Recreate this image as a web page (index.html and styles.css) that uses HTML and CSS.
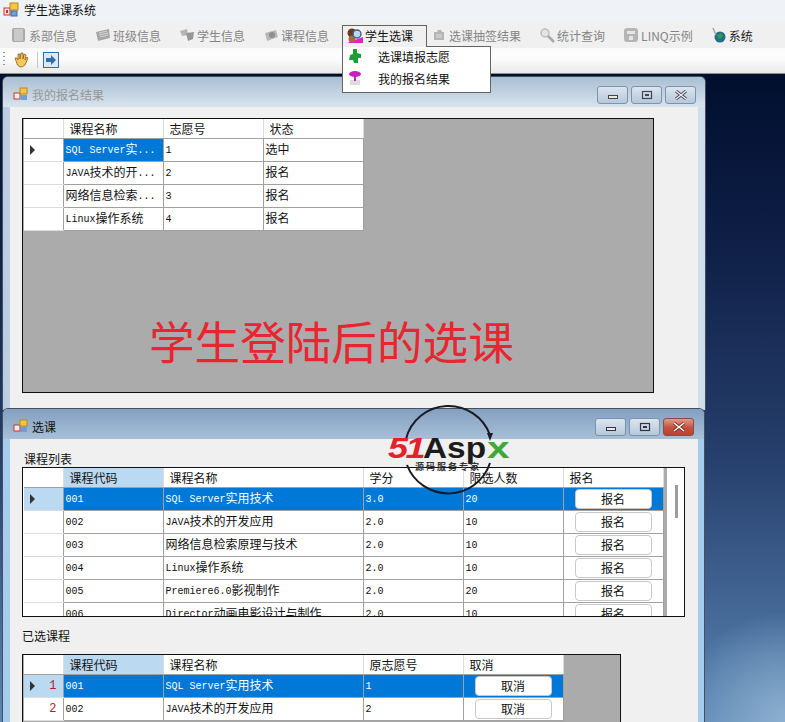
FILE: index.html
```html
<!DOCTYPE html>
<html lang="zh">
<head>
    <meta charset="UTF-8">
    <title>学生选课系统</title>
    <link rel="stylesheet" href="styles.css">
</head>
<body>
    <div class="app-title">
        <svg class="app-icon" width="16" height="16" viewBox="0 0 16 16"><rect x="1" y="6" width="6" height="7" fill="#e8e8e8" stroke="#c0392b"/><rect x="3" y="8" width="2" height="3" fill="#c0392b"/><rect x="7" y="1" width="8" height="7" fill="#f4c542" stroke="#b98a10"/><rect x="8" y="9" width="6" height="5" fill="#6f9fd8" stroke="#3b6ea8"/></svg>
        <span>学生选课系统</span>
    </div>

    <div class="menu-bar">
        <div class="menu-item">
            <svg width="16" height="16" viewBox="0 0 16 16"><rect x="1" y="1" width="13" height="14" rx="2" fill="#a9a9a9"/><rect x="3" y="2" width="9" height="12" fill="#c9c9c9"/></svg>
            <span>系部信息</span>
        </div>
        <div class="menu-item">
            <svg width="16" height="16" viewBox="0 0 16 16"><path d="M1 5 L14 2 L15 11 L3 14 Z" fill="#a6a6a6"/><path d="M4 6 L12 4 M4 8 L13 6 M5 10 L13 8" stroke="#d4d4d4"/></svg>
            <span>班级信息</span>
        </div>
        <div class="menu-item">
            <svg width="16" height="16" viewBox="0 0 16 16"><path d="M1 4 L8 2 L9 8 L3 9 Z" fill="#b5b5b5"/><path d="M7 6 L15 5 L14 12 L9 14 Z" fill="#979797"/></svg>
            <span>学生信息</span>
        </div>
        <div class="menu-item">
            <svg width="16" height="16" viewBox="0 0 16 16"><path d="M2 6 L13 3 L15 10 L4 14 Z" fill="#b8b8b8"/><circle cx="9" cy="8" r="3" fill="#8f8f8f"/></svg>
            <span>课程信息</span>
        </div>
        <div class="menu-item active">
            <svg width="16" height="16" viewBox="0 0 16 16"><rect x="0" y="0" width="16" height="16" fill="#f5f5f5"/><path d="M0 16 L16 10 L16 16 Z" fill="#e020c0"/><circle cx="5" cy="6" r="4.5" fill="#6b3a1c"/><circle cx="5" cy="12" r="3.5" fill="#a86a3c"/><circle cx="10" cy="7" r="4" fill="#bcd8f2" stroke="#3a5f8c" stroke-width="1.4"/></svg>
            <span>学生选课</span>
        </div>
        <div class="menu-item">
            <svg width="16" height="16" viewBox="0 0 16 16"><path d="M3 5 L6 5 L7 3 L10 3 L11 5 L13 5 L13 13 L3 13 Z" fill="#b4b4b4"/><path d="M5 8 H11 M5 10 H11" stroke="#dedede"/></svg>
            <span>选课抽签结果</span>
        </div>
        <div class="menu-item">
            <svg width="16" height="16" viewBox="0 0 16 16"><circle cx="6" cy="6" r="4" fill="#e4e4e4" stroke="#bdbdbd" stroke-width="1.5"/><path d="M9 9 L15 15" stroke="#a8a8a8" stroke-width="2.5"/></svg>
            <span>统计查询</span>
        </div>
        <div class="menu-item">
            <svg width="16" height="16" viewBox="0 0 16 16"><rect x="1" y="1" width="14" height="14" rx="3" fill="#b5b5b5"/><rect x="4" y="4" width="8" height="3" fill="#e6e6e6"/><rect x="6" y="9" width="4" height="4" fill="#e6e6e6"/></svg>
            <span>LINQ示例</span>
        </div>
        <div class="menu-item dark">
            <svg width="16" height="16" viewBox="0 0 16 16"><circle cx="9" cy="10" r="5.5" fill="#1f6d8f"/><path d="M6 8 L10 6 L12 9 L9 12 L7 11 Z" fill="#3d9a3a"/><path d="M2 1 L5 8" stroke="#a9a9a9" stroke-width="1.5"/></svg>
            <span>系统</span>
        </div>
    </div>

    <div class="dropdown">
        <div class="dropdown-row">
            <svg width="16" height="16" viewBox="0 0 16 16"><path d="M6 1 L10 1 L10 5 L14 6 L14 10 L11 10 L11 15 L7 15 L6 12 L2 12 L3 7 L6 6 Z" fill="#1f9e35"/></svg>
            <span>选课填报志愿</span>
        </div>
        <div class="dropdown-row">
            <svg width="16" height="16" viewBox="0 0 16 16"><rect x="3" y="10" width="10" height="5" fill="#dcdcdc"/><ellipse cx="8" cy="4" rx="6" ry="3" fill="#c81fc0"/><rect x="7" y="6" width="2" height="5" fill="#c81fc0"/></svg>
            <span>我的报名结果</span>
        </div>
    </div>

    <div class="tool-bar">
        <div class="grip"></div>
        <svg class="tool-hand" width="16" height="16" viewBox="0 0 16 16"><path d="M3 9 L2 6 L4 6 L5 8 L5 2 L7 2 L7 7 L8 1 L10 1 L10 7 L11 2 L13 3 L12 8 L14 5 L15 6 L12 13 Q10 15 7 15 Q4 14 3 9 Z" fill="#f5c95c" stroke="#8a5a1a" stroke-width=".8"/></svg>
        <div class="tool-sep"></div>
        <svg width="16" height="16" viewBox="0 0 16 16"><rect x=".5" y=".5" width="15" height="15" fill="#dbe9f8" stroke="#2f6db0"/><path d="M3 6 H8 V3 L13 8 L8 13 V10 H3 Z" fill="#2f6db0"/></svg>
    </div>

    <div class="desktop">
        <!-- back window -->
        <div class="win win-back">
            <div class="win-title">
                <svg width="16" height="16" viewBox="0 0 16 16"><rect x="1" y="6" width="6" height="6" fill="#eee" stroke="#c0392b"/><rect x="7" y="1" width="7" height="6" fill="#f4c542" stroke="#b98a10"/><rect x="8" y="8" width="6" height="5" fill="#6f9fd8"/></svg>
                <span class="win-name">我的报名结果</span>
                <div class="win-btns">
                    <div class="win-btn"><svg width="12" height="10" viewBox="0 0 12 10"><rect x="1.5" y="5.5" width="9" height="3" fill="#e8e8e8" stroke="#445"/></svg></div>
                    <div class="win-btn"><svg width="12" height="10" viewBox="0 0 12 10"><rect x="1.5" y="1.5" width="9" height="7" fill="none" stroke="#445" stroke-width="1.2"/><rect x="4" y="4" width="4" height="2" fill="#445"/></svg></div>
                    <div class="win-btn"><svg width="14" height="10" viewBox="0 0 14 10"><path d="M2 1 L12 9 M12 1 L2 9" stroke="#445" stroke-width="3"/><path d="M2 1 L12 9 M12 1 L2 9" stroke="#eee" stroke-width="1.4"/></svg></div>
                </div>
            </div>
            <div class="win-body">
                <div class="grid grid-result">
                    <table>
                        <colgroup><col class="c-head"><col class="c-100"><col class="c-100"><col class="c-100"></colgroup>
                        <tr class="hdr"><th></th><th>课程名称</th><th>志愿号</th><th>状态</th></tr>
                        <tr><td class="row-h"><i class="arrow"></i></td><td class="sel">SQL Server<span class="cn">实</span>...</td><td>1</td><td><span class="cn">选中</span></td></tr>
                        <tr><td class="row-h"></td><td>JAVA<span class="cn">技术的开</span>...</td><td>2</td><td><span class="cn">报名</span></td></tr>
                        <tr><td class="row-h"></td><td><span class="cn">网络信息检索</span>...</td><td>3</td><td><span class="cn">报名</span></td></tr>
                        <tr><td class="row-h"></td><td>Linux<span class="cn">操作系统</span></td><td>4</td><td><span class="cn">报名</span></td></tr>
                    </table>
                    <div class="big-note">学生登陆后的选课</div>
                </div>
            </div>
        </div>

        <!-- front window -->
        <div class="win win-front">
            <div class="win-title">
                <svg width="16" height="16" viewBox="0 0 16 16"><rect x="1" y="6" width="6" height="6" fill="#eee" stroke="#c0392b"/><rect x="7" y="1" width="7" height="6" fill="#f4c542" stroke="#b98a10"/><rect x="8" y="8" width="6" height="5" fill="#6f9fd8"/></svg>
                <span class="win-name">选课</span>
                <div class="win-btns">
                    <div class="win-btn"><svg width="12" height="10" viewBox="0 0 12 10"><rect x="1.5" y="5.5" width="9" height="3" fill="#e8e8e8" stroke="#334"/></svg></div>
                    <div class="win-btn"><svg width="12" height="10" viewBox="0 0 12 10"><rect x="1.5" y="1.5" width="9" height="7" fill="none" stroke="#334" stroke-width="1.2"/><rect x="4" y="4" width="4" height="2" fill="#334"/></svg></div>
                    <div class="win-btn close"><svg width="14" height="10" viewBox="0 0 14 10"><path d="M2 1 L12 9 M12 1 L2 9" stroke="#6b2a22" stroke-width="3"/><path d="M2 1 L12 9 M12 1 L2 9" stroke="#fff" stroke-width="1.6"/></svg></div>
                </div>
            </div>
            <div class="win-body">
                <div class="label">课程列表</div>
                <div class="grid grid-courses">
                    <table>
                        <colgroup><col class="c-head"><col class="c-100"><col class="c-200"><col class="c-100"><col class="c-100"><col class="c-100"></colgroup>
                        <tr class="hdr"><th></th><th class="hl">课程代码</th><th>课程名称</th><th>学分</th><th>限选人数</th><th>报名</th></tr>
                        <tr class="cur"><td class="row-h"><i class="arrow"></i></td><td>001</td><td>SQL Server<span class="cn">实用技术</span></td><td>3.0</td><td>20</td><td class="c-btn"><button>报名</button></td></tr>
                        <tr><td class="row-h"></td><td>002</td><td>JAVA<span class="cn">技术的开发应用</span></td><td>2.0</td><td>10</td><td class="c-btn"><button>报名</button></td></tr>
                        <tr><td class="row-h"></td><td>003</td><td><span class="cn">网络信息检索原理与技术</span></td><td>2.0</td><td>10</td><td class="c-btn"><button>报名</button></td></tr>
                        <tr><td class="row-h"></td><td>004</td><td>Linux<span class="cn">操作系统</span></td><td>2.0</td><td>10</td><td class="c-btn"><button>报名</button></td></tr>
                        <tr><td class="row-h"></td><td>005</td><td>Premiere6.0<span class="cn">影视制作</span></td><td>2.0</td><td>20</td><td class="c-btn"><button>报名</button></td></tr>
                        <tr><td class="row-h"></td><td>006</td><td>Director<span class="cn">动画电影设计与制作</span></td><td>2.0</td><td>10</td><td class="c-btn"><button>报名</button></td></tr>
                    </table>
                    <div class="scroll-side"><div class="scroll-thumb"></div></div>
                </div>
                <div class="label label-picked">已选课程</div>
                <div class="grid grid-picked">
                    <table>
                        <colgroup><col class="c-head"><col class="c-100"><col class="c-200"><col class="c-100"><col class="c-100"></colgroup>
                        <tr class="hdr"><th></th><th class="hl">课程代码</th><th>课程名称</th><th>原志愿号</th><th>取消</th></tr>
                        <tr class="cur"><td class="row-h"><i class="arrow"></i><b>1</b></td><td>001</td><td>SQL Server<span class="cn">实用技术</span></td><td>1</td><td class="c-btn"><button>取消</button></td></tr>
                        <tr><td class="row-h"><b>2</b></td><td>002</td><td>JAVA<span class="cn">技术的开发应用</span></td><td>2</td><td class="c-btn"><button>取消</button></td></tr>
                    </table>
                </div>
            </div>
        </div>

        <!-- watermark -->
        <div class="logo">
            <svg class="logo-ring" width="92" height="92" viewBox="0 0 92 92"><path d="M4 36 A44 44 0 0 1 88 32" fill="none" stroke="#1a1a24" stroke-width="2"/><path d="M85 30 L91 30 L88 38 Z" fill="#1a1a24"/><path d="M88 60 A44 44 0 0 1 5 62" fill="none" stroke="#1a1a24" stroke-width="2"/></svg>
            <span class="logo-51">51</span><span class="logo-asp">Asp</span><span class="logo-x">x</span>
            <div class="logo-sub">源码服务专家</div>
        </div>
    </div>
</body>
</html>
```

FILE: styles.css
```css
* {
    box-sizing: border-box;
}

html, body {
    margin: 0;
    height: 100%;
}

body {
    width: 785px;
    height: 722px;
    overflow: hidden;
    display: flex;
    flex-direction: column;
    position: relative;
    font-family: "Noto Sans CJK SC", "Liberation Sans", sans-serif;
    font-size: 12px;
    color: #111;
    background-color: #f0f0f0;
}

svg {
    flex-shrink: 0;
    display: block;
}

/* top bars */
.app-title {
    height: 23px;
    display: flex;
    align-items: center;
    gap: 5px;
    padding-left: 3px;
    padding-bottom: 4px;
    background-color: #eff3f8;
}

.menu-bar {
    height: 25px;
    display: flex;
    align-items: center;
    gap: 18px;
    padding-left: 11px;
    padding-bottom: 1px;
    background-color: #f0f0f0;
    color: #858585;
}

.menu-item {
    display: flex;
    align-items: center;
    gap: 2px;
}

.menu-item.dark {
    color: #222;
}

.menu-item.active {
    color: #111;
}

.dropdown {
    position: absolute;
    left: 342px;
    top: 25px;
    width: 149px;
    height: 68px;
    z-index: 5;
    pointer-events: none;
    color: #111;
    padding-top: 20px;
    background: linear-gradient(#646464, #646464) 0 0 / 85px 1px no-repeat,
        linear-gradient(#646464, #646464) 0 0 / 1px 100% no-repeat,
        linear-gradient(#646464, #646464) 84px 0 / 1px 22px no-repeat,
        linear-gradient(#646464, #646464) 84px 21px / 65px 1px no-repeat,
        linear-gradient(#646464, #646464) 148px 21px / 1px 47px no-repeat,
        linear-gradient(#646464, #646464) 0 67px / 149px 1px no-repeat,
        linear-gradient(#fff, #fff) 0 22px / 149px 46px no-repeat;
}

.dropdown-row {
    height: 22px;
    display: flex;
    align-items: center;
    gap: 15px;
    padding-left: 5px;
}

.tool-bar {
    height: 26px;
    display: flex;
    align-items: center;
    padding-left: 3px;
    padding-bottom: 2px;
    background: linear-gradient(#fafafa, #fdfdfd 40%, #e9e9e9);
    border-bottom: 1px solid #8e8e8e;
}

.grip {
    width: 2px;
    height: 16px;
    background: repeating-linear-gradient(#9a9a9a 0 1px, transparent 1px 4px);
}

.tool-hand {
    margin-left: 8px;
}

.tool-sep {
    width: 1px;
    height: 16px;
    margin: 0 5px 0 8px;
    background-color: #c5c5c5;
}

/* mdi area, windows sit freely on it */
.desktop {
    flex: 1;
    position: relative;
    background: radial-gradient(circle at 100% 100%, #8db0d0 0, rgba(141, 176, 208, 0) 110px),
        linear-gradient(#010e2e 0, #0e1e45 25%, #27406d 60%, #5b86b5 100%);
}

.win {
    position: absolute;
    display: flex;
    flex-direction: column;
    padding: 0 7px;
    border: 1px solid #44505e;
    border-bottom: none;
    border-radius: 6px 6px 0 0;
}

.win-back {
    left: 2px;
    top: 2px;
    width: 704px;
    height: 334px;
    background: linear-gradient(90deg, #b9cce0, #c9d8e8 3%, #d6e2ed 97%, #cfdeec);
}

.win-front {
    left: 2px;
    top: 334px;
    width: 703px;
    height: 320px;
    padding-right: 6px;
    background: #a7cdec;
}

.win-title {
    height: 30px;
    flex-shrink: 0;
    margin: 0 -7px;
    padding: 5px 9px 0 10px;
    display: flex;
    align-items: center;
    gap: 3px;
    border-radius: 5px 5px 0 0;
}

.win-front .win-title {
    margin-right: -6px;
    padding-right: 10px;
    background: linear-gradient(#83a0c1, #a8bfd6);
}

.win-back .win-title {
    background: linear-gradient(#a9bed2, #d9e4ee);
}

.win-back .win-name {
    color: #979797;
}

.win-btns {
    margin-left: auto;
    display: flex;
    gap: 3px;
}

.win-btn {
    width: 31px;
    height: 18px;
    display: flex;
    align-items: center;
    justify-content: center;
    border: 1px solid #7b93ad;
    border-radius: 3px;
    background: linear-gradient(#dbe5ef, #b6c8da);
}

.win-btn.close {
    border-color: #8a4d45;
    background: linear-gradient(#e09b8a, #c4503c 55%, #b8452f);
}

.win-body {
    flex: 1;
    background-color: #f0f0f0;
    padding: 11px 12px 0;
}

/* data grids */
.grid {
    border: 1px solid #111;
    background-color: #ababab;
    overflow: hidden;
    position: relative;
    display: flex;
    align-items: flex-start;
}

.grid-result {
    width: 632px;
    height: 275px;
}

.grid-courses {
    width: 663px;
    height: 150px;
    background-color: #fff;
}

.grid-picked {
    width: 599px;
    height: 80px;
}

table {
    flex-shrink: 0;
    table-layout: fixed;
    border-collapse: collapse;
    font-family: "Liberation Mono", "Noto Sans CJK SC", monospace;
    font-size: 10px;
    margin-left: 1px;
}

.c-head { width: 39px; }
.c-100 { width: 100px; }
.c-200 { width: 200px; }

tr {
    height: 23px;
}

tr.hdr {
    height: 19px;
}

th, td {
    padding: 2px 0 0 2px;
    overflow: hidden;
    white-space: nowrap;
    text-align: left;
    background-color: #fff;
    border-right: 1px solid #a0a0a0;
    border-bottom: 1px solid #a0a0a0;
    font-weight: normal;
}

td {
    height: 23px;
    line-height: 20px;
}

.cn {
    font-family: "Noto Sans CJK SC", sans-serif;
    font-size: 12px;
    line-height: 12px;
    vertical-align: -1px;
}

th {
    padding: 1px 0 0 6px;
    height: 19px;
    font-family: "Noto Sans CJK SC", sans-serif;
    font-size: 12px;
    line-height: 17px;
    border-right-color: #dcdcdc;
}

th.hl {
    background-color: #bcd9f2;
}

td.sel,
tr.cur td {
    background-color: #0078d7;
    color: #fff;
}

td.row-h,
tr.cur td.row-h {
    position: relative;
    background-color: #fff;
    border-right-color: #a0a0a0;
    border-bottom-color: #dcdcdc;
}

tr.cur td.row-h {
    background-color: #bcd9f2;
}

.arrow {
    position: absolute;
    left: 6px;
    top: 6px;
    width: 0;
    height: 0;
    border-left: 5px solid #333;
    border-top: 5px solid transparent;
    border-bottom: 5px solid transparent;
}

.row-h b {
    position: absolute;
    right: 6px;
    top: 1px;
    font-weight: normal;
    font-size: 12px;
    color: #b0202a;
}

td.c-btn {
    padding: 0 0 0 11px;
}

td.c-btn button {
    display: block;
    width: 77px;
    height: 20px;
    padding: 0;
    border: 1px solid #c8c8c8;
    border-radius: 4px;
    background-color: #fff;
    color: #111;
    font-family: "Noto Sans CJK SC", sans-serif;
    font-size: 12px;
    line-height: 18px;
}

.scroll-side {
    flex: 1;
    height: 100%;
    border-left: 3px solid #ababab;
    background-color: #fff;
}

.scroll-thumb {
    position: absolute;
    left: 652px;
    top: 17px;
    width: 3px;
    height: 33px;
    background-color: #9c9c9c;
}

.big-note {
    position: absolute;
    left: 126px;
    top: 188px;
    font-family: "Noto Sans CJK SC", sans-serif;
    font-size: 45.6px;
    line-height: 66px;
    color: #e8262f;
    white-space: nowrap;
}

.label {
    height: 17px;
    line-height: 17px;
    margin-left: 2px;
}

.label-picked {
    margin: 10px 0 10px;
}

/* watermark */
.logo {
    position: absolute;
    left: 387px;
    top: 329px;
    width: 126px;
    height: 92px;
    z-index: 4;
    pointer-events: none;
    font-family: "Liberation Sans", sans-serif;
    font-weight: bold;
}

.logo-ring {
    position: absolute;
    left: 15px;
    top: 0;
}

.logo-51,
.logo-asp,
.logo-x {
    position: absolute;
    top: 35px;
    line-height: 20px;
    transform-origin: 0 50%;
    white-space: nowrap;
}

.logo-51 {
    left: 1px;
    font-size: 30px;
    font-style: italic;
    color: #e8202a;
    letter-spacing: -2px;
    transform: scaleX(1.2);
}

.logo-asp {
    left: 36px;
    font-size: 29px;
    color: #1c1c1c;
    transform: scaleX(1.15);
}

.logo-x {
    left: 100px;
    font-size: 29px;
    color: #3bab35;
    transform: scaleX(1.4);
}

.logo-sub {
    position: absolute;
    left: 28px;
    top: 58px;
    font-family: "Noto Sans CJK SC", sans-serif;
    font-size: 9px;
    line-height: 11px;
    letter-spacing: 2px;
    color: #333;
    white-space: nowrap;
}
```
